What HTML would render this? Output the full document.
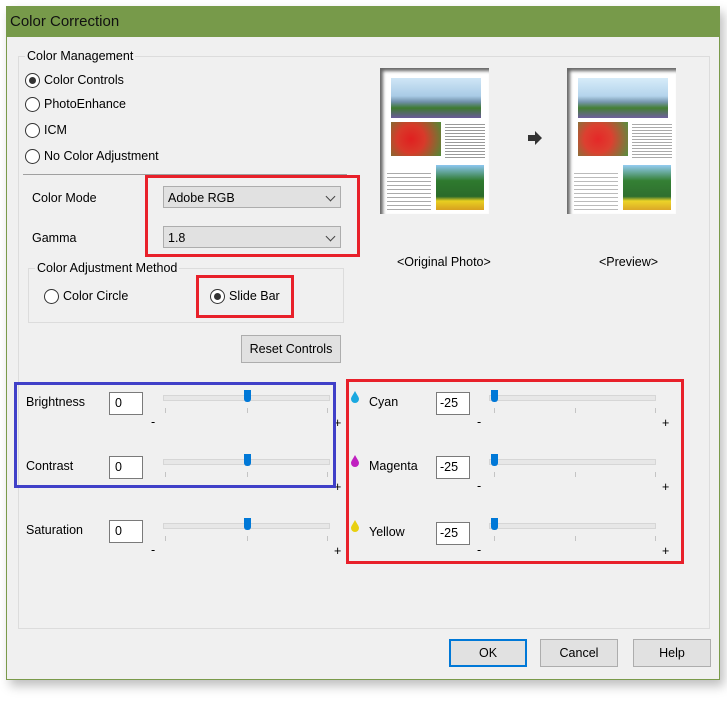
<!DOCTYPE html>
<html><head><style>
body{margin:0;width:727px;height:705px;background:#fff;position:relative;overflow:hidden;font-family:"Liberation Sans",sans-serif;font-size:12.5px;color:#000}
.a{position:absolute}
.win{left:6px;top:6px;width:712px;height:672px;background:#f0f0f0;border:1px solid #7a9a4a;box-shadow:4px 6px 10px rgba(0,0,0,.25)}
.title{left:6px;top:6px;width:714px;height:31px;background:#779a4a}
.grp{border:1px solid #dcdcdc}
.lbl{background:#f0f0f0;padding:0 2px}
.rad{width:13px;height:13px;border:1px solid #333;border-radius:50%;background:#fff}
.rad.on::after{content:"";position:absolute;left:3px;top:3px;width:7px;height:7px;border-radius:50%;background:#333}
.dd{background:#e1e1e1;border:1px solid #adadad;height:22px;width:178px;line-height:22px;padding-left:4px;box-sizing:border-box}
.dd::after{content:"";position:absolute;right:6px;top:6px;width:6px;height:6px;border-right:1px solid #444;border-bottom:1px solid #444;transform:rotate(45deg)}
.btn{background:#e1e1e1;border:1px solid #adadad;box-sizing:border-box;text-align:center}
.red{border:3px solid #e8202a;box-sizing:border-box}
.blue{border:3px solid #4040c8;box-sizing:border-box}
.tb{width:34px;height:23px;background:#fff;border:1px solid #7a7a7a;box-sizing:border-box;line-height:21px;padding-left:5px}
.trk{height:4px;background:#e7e7e7;border:1px solid #d6d6d6;width:165px}
.th{width:7px;height:12px;background:#0078d7;border-radius:0 0 3px 3px}
.tk{width:1px;height:5px;background:#c4c4c4}
</style></head><body>
<div class="a win"></div>
<div class="a title"></div>
<div class="a" style="left:10px;top:13px;font-size:15px;color:#111">Color Correction</div>
<div class="a grp" style="left:18px;top:56px;width:690px;height:571px"></div>
<div class="a lbl" style="left:25px;top:49px">Color Management</div>
<div class="a rad on" style="left:25px;top:73px"></div><div class="a" style="left:44px;top:73px">Color Controls</div>
<div class="a rad" style="left:25px;top:97px"></div><div class="a" style="left:44px;top:97px">PhotoEnhance</div>
<div class="a rad" style="left:25px;top:123px"></div><div class="a" style="left:44px;top:123px">ICM</div>
<div class="a rad" style="left:25px;top:149px"></div><div class="a" style="left:44px;top:149px">No Color Adjustment</div>
<div class="a" style="left:23px;top:174px;width:324px;height:1px;background:#a0a0a0"></div>
<div class="a" style="left:32px;top:191px">Color Mode</div>
<div class="a dd" style="left:163px;top:186px">Adobe RGB</div>
<div class="a" style="left:32px;top:231px">Gamma</div>
<div class="a dd" style="left:163px;top:226px">1.8</div>
<div class="a red" style="left:145px;top:175px;width:215px;height:82px"></div>
<div class="a grp" style="left:28px;top:268px;width:314px;height:53px"></div>
<div class="a lbl" style="left:35px;top:261px">Color Adjustment Method</div>
<div class="a rad" style="left:44px;top:289px"></div><div class="a" style="left:63px;top:289px">Color Circle</div>
<div class="a rad on" style="left:210px;top:289px"></div><div class="a" style="left:229px;top:289px">Slide Bar</div>
<div class="a red" style="left:196px;top:275px;width:98px;height:43px"></div>
<div class="a btn" style="left:241px;top:335px;width:100px;height:28px;line-height:26px">Reset Controls</div>
<!-- images -->
<div class="a" style="left:380px;top:68px;width:109px;height:146px;background:#fff;box-shadow:inset 3px 3px 3px #666"></div>
<div class="a" style="left:391px;top:78px;width:90px;height:40px;background:linear-gradient(#cfe6f6 0,#a9cbe6 45%,#6f8fa8 60%,#3e7a30 75%,#6a5a9a 100%)"></div>
<div class="a" style="left:391px;top:122px;width:50px;height:34px;background:radial-gradient(circle at 40% 50%,#e02020 0,#d83a2a 40%,#4f8a35 100%)"></div>
<div class="a" style="left:445px;top:122px;width:40px;height:38px;background:repeating-linear-gradient(#fff 0 2px,#999 2px 3px)"></div>
<div class="a" style="left:436px;top:165px;width:48px;height:45px;background:linear-gradient(#8cc6f0 0,#2e7a2e 35%,#2a6a2a 70%,#e8d020 80%,#d8a020 100%)"></div>
<div class="a" style="left:387px;top:170px;width:44px;height:40px;background:repeating-linear-gradient(#fff 0 3px,#aaa 3px 4px)"></div>
<div class="a" style="left:567px;top:68px;width:109px;height:146px;background:#fff;box-shadow:inset 3px 3px 3px #666"></div>
<div class="a" style="left:578px;top:78px;width:90px;height:40px;background:linear-gradient(#d7ecf9 0,#b4d4ec 45%,#7797ae 60%,#447f34 75%,#6f5f9e 100%)"></div>
<div class="a" style="left:578px;top:122px;width:50px;height:34px;background:radial-gradient(circle at 40% 50%,#e52828 0,#dc4030 40%,#559040 100%)"></div>
<div class="a" style="left:632px;top:122px;width:40px;height:38px;background:repeating-linear-gradient(#fff 0 2px,#aaa 2px 3px)"></div>
<div class="a" style="left:623px;top:165px;width:48px;height:45px;background:linear-gradient(#94ccf2 0,#348034 35%,#2f6f2f 70%,#ecd428 80%,#dca828 100%)"></div>
<div class="a" style="left:574px;top:170px;width:44px;height:40px;background:repeating-linear-gradient(#fff 0 3px,#bbb 3px 4px)"></div>
<svg class="a" style="left:527px;top:130px" width="16" height="16"><path d="M1 5h7V1l7 7-7 7v-4H1z" fill="#333"/></svg>
<div class="a" style="left:397px;top:255px">&lt;Original Photo&gt;</div>
<div class="a" style="left:599px;top:255px">&lt;Preview&gt;</div>
<!-- sliders left -->
<div class="a" style="left:26px;top:395px">Brightness</div>
<div class="a" style="left:26px;top:459px">Contrast</div>
<div class="a" style="left:26px;top:523px">Saturation</div>
<div class="a tb" style="left:109px;top:392px">0</div>
<div class="a tb" style="left:109px;top:456px">0</div>
<div class="a tb" style="left:109px;top:520px">0</div>
<div class="a trk" style="left:163px;top:395px"></div><div class="a th" style="left:244px;top:390px"></div>
<div class="a trk" style="left:163px;top:459px"></div><div class="a th" style="left:244px;top:454px"></div>
<div class="a trk" style="left:163px;top:523px"></div><div class="a th" style="left:244px;top:518px"></div>
<div class="a tk" style="left:165px;top:408px"></div><div class="a tk" style="left:247px;top:408px"></div><div class="a tk" style="left:327px;top:408px"></div>
<div class="a tk" style="left:165px;top:472px"></div><div class="a tk" style="left:247px;top:472px"></div><div class="a tk" style="left:327px;top:472px"></div>
<div class="a tk" style="left:165px;top:536px"></div><div class="a tk" style="left:247px;top:536px"></div><div class="a tk" style="left:327px;top:536px"></div>
<div class="a" style="left:151px;top:415px">-</div><div class="a" style="left:334px;top:416px">+</div>
<div class="a" style="left:151px;top:479px">-</div><div class="a" style="left:334px;top:480px">+</div>
<div class="a" style="left:151px;top:543px">-</div><div class="a" style="left:334px;top:544px">+</div>
<div class="a blue" style="left:14px;top:382px;width:322px;height:106px"></div>
<!-- sliders right -->
<svg class="a" style="left:351px;top:391px" width="8" height="12"><path d="M4 0C2 4 0 6 0 8a4 4 0 0 0 8 0c0-2-2-4-4-8z" fill="#1aa8e0"/></svg>
<svg class="a" style="left:351px;top:455px" width="8" height="12"><path d="M4 0C2 4 0 6 0 8a4 4 0 0 0 8 0c0-2-2-4-4-8z" fill="#c020c0"/></svg>
<svg class="a" style="left:351px;top:520px" width="8" height="12"><path d="M4 0C2 4 0 6 0 8a4 4 0 0 0 8 0c0-2-2-4-4-8z" fill="#e8d010"/></svg>
<div class="a" style="left:369px;top:395px">Cyan</div>
<div class="a" style="left:369px;top:459px">Magenta</div>
<div class="a" style="left:369px;top:525px">Yellow</div>
<div class="a tb" style="left:436px;top:392px;padding-left:3px">-25</div>
<div class="a tb" style="left:436px;top:456px;padding-left:3px">-25</div>
<div class="a tb" style="left:436px;top:522px;padding-left:3px">-25</div>
<div class="a trk" style="left:489px;top:395px"></div><div class="a th" style="left:491px;top:390px"></div>
<div class="a trk" style="left:489px;top:459px"></div><div class="a th" style="left:491px;top:454px"></div>
<div class="a trk" style="left:489px;top:523px"></div><div class="a th" style="left:491px;top:518px"></div>
<div class="a tk" style="left:494px;top:408px"></div><div class="a tk" style="left:575px;top:408px"></div><div class="a tk" style="left:655px;top:408px"></div>
<div class="a tk" style="left:494px;top:472px"></div><div class="a tk" style="left:575px;top:472px"></div><div class="a tk" style="left:655px;top:472px"></div>
<div class="a tk" style="left:494px;top:536px"></div><div class="a tk" style="left:575px;top:536px"></div><div class="a tk" style="left:655px;top:536px"></div>
<div class="a" style="left:477px;top:415px">-</div><div class="a" style="left:662px;top:416px">+</div>
<div class="a" style="left:477px;top:479px">-</div><div class="a" style="left:662px;top:480px">+</div>
<div class="a" style="left:477px;top:543px">-</div><div class="a" style="left:662px;top:544px">+</div>
<div class="a red" style="left:346px;top:379px;width:338px;height:185px"></div>
<!-- buttons -->
<div class="a btn" style="left:449px;top:639px;width:78px;height:28px;line-height:24px;border:2px solid #0078d7">OK</div>
<div class="a btn" style="left:540px;top:639px;width:78px;height:28px;line-height:26px">Cancel</div>
<div class="a btn" style="left:633px;top:639px;width:78px;height:28px;line-height:26px">Help</div>
</body></html>
